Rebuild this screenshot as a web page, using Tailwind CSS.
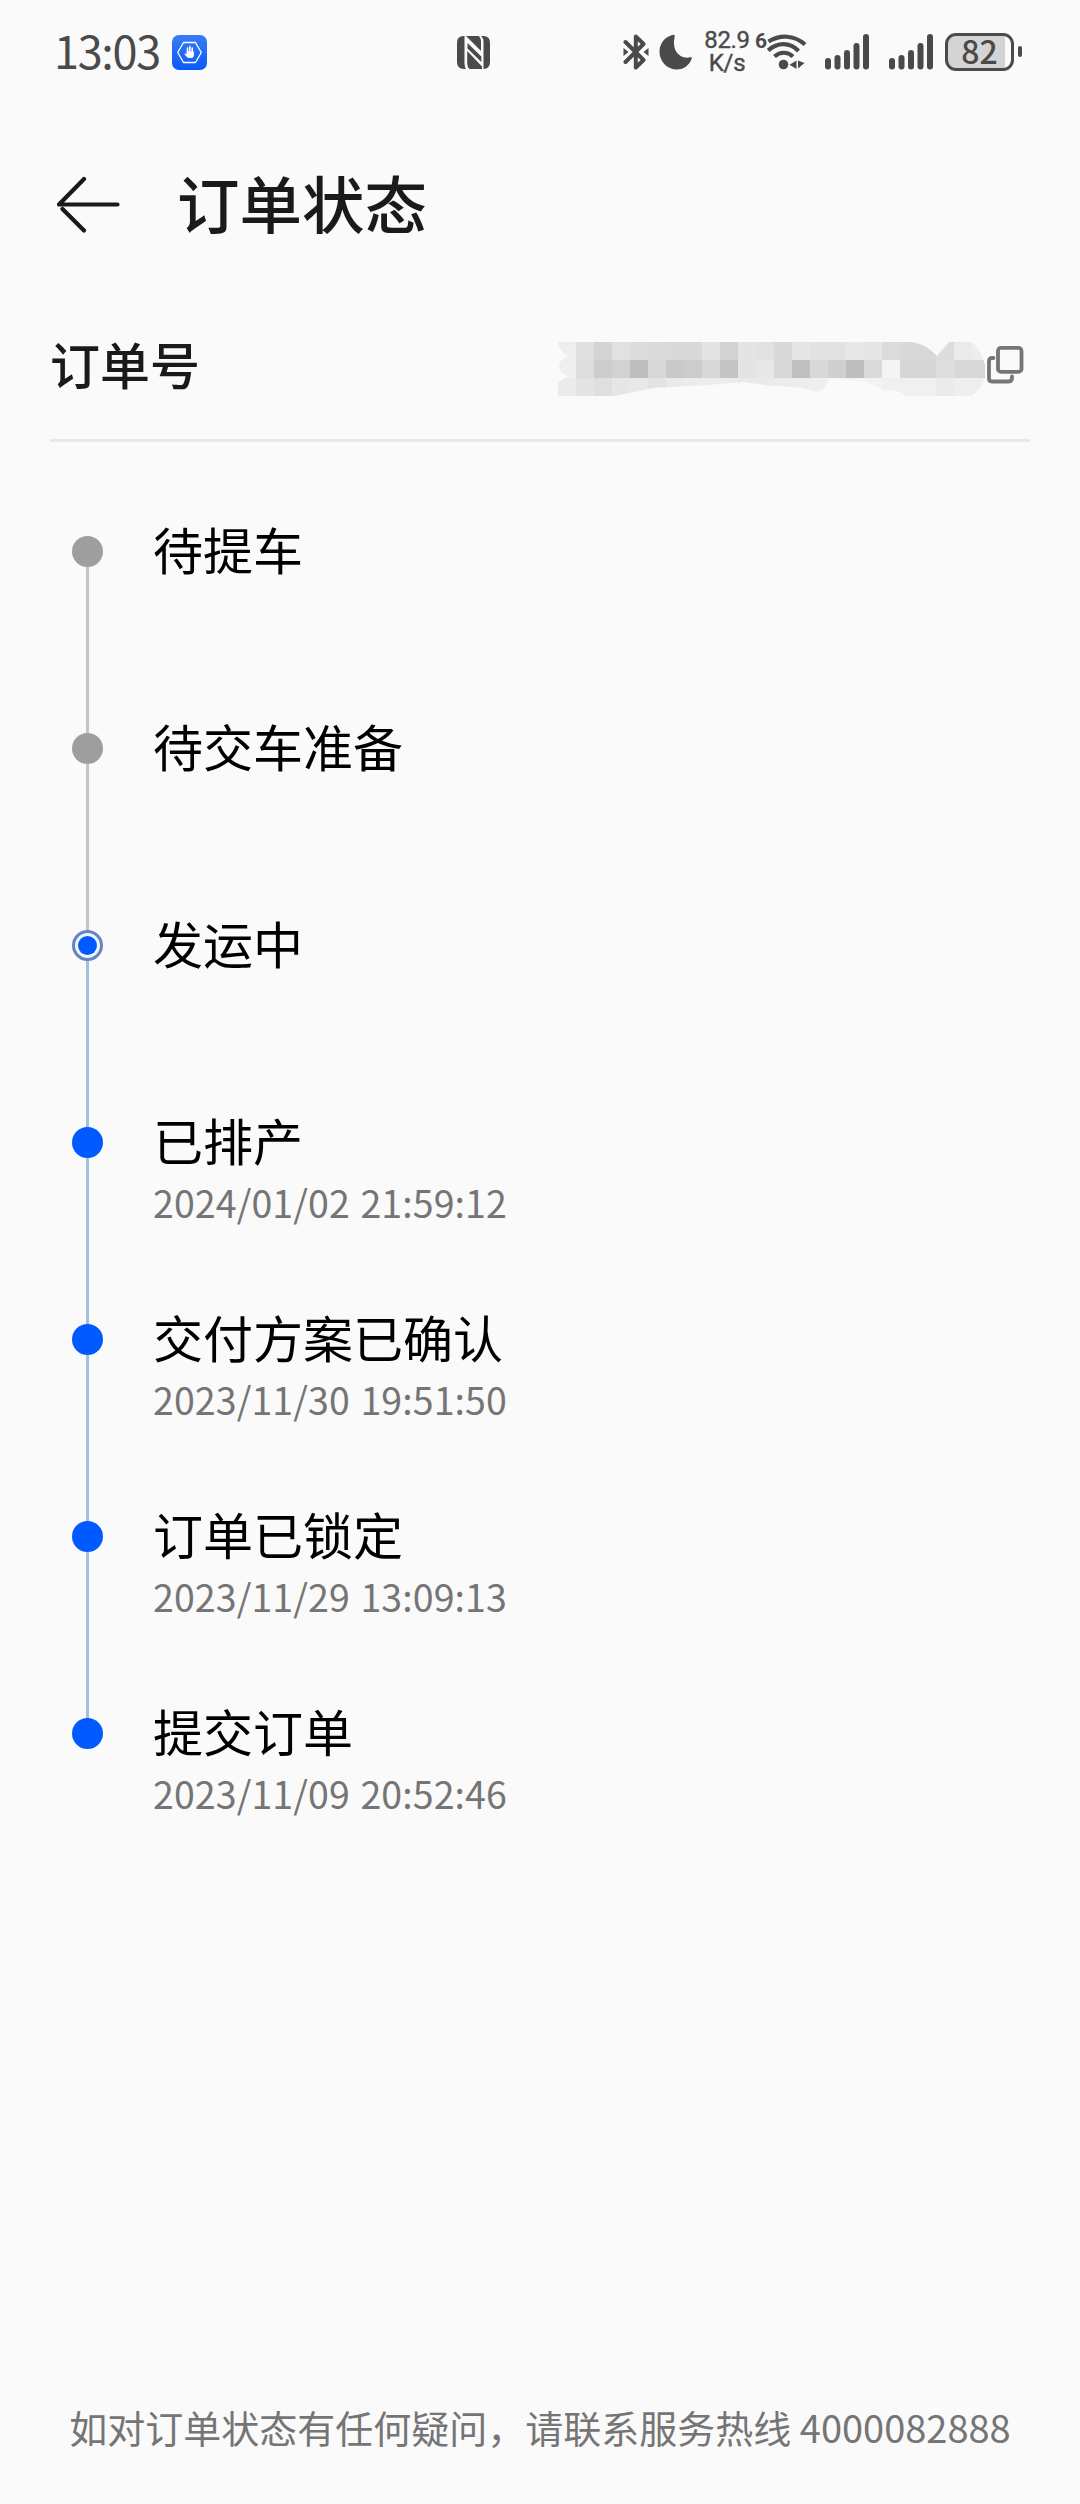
<!DOCTYPE html>
<html lang="zh-CN">
<head>
    <meta charset="UTF-8">
    <meta name="viewport" content="width=device-width, initial-scale=1.0">
    <title>订单状态</title>
    <script src="https://cdn.jsdelivr.net/npm/@tailwindcss/browser@4"></script>
</head>
<body class="bg-[#fafafa] w-[1080px] h-[2504px] flex flex-col overflow-hidden font-['Noto_Sans_CJK_SC',sans-serif]">
    <!-- Status bar -->
    <div class="h-[104px] flex items-center text-[#4a4a4a] shrink-0">
        <span class="ml-[54px] w-[118px] text-[45px] leading-[60px] tracking-[-1.3px] whitespace-nowrap -mt-1">13:03</span>
        <svg class="w-[35px] h-[35px] shrink-0" viewBox="0 0 35 35">
            <defs>
                <linearGradient id="appBg" x1="0" y1="0" x2="0" y2="1">
                    <stop offset="0" stop-color="#3b7cf6"/>
                    <stop offset="1" stop-color="#0a59f7"/>
                </linearGradient>
            </defs>
            <rect width="35" height="35" rx="7" fill="url(#appBg)"/>
            <path d="M11.500 7.500h12L29.300 17.500 23.500 27.500h-12L5.700 17.500z" fill="none" stroke="#fff" stroke-width="1.300" stroke-linejoin="round"/>
            <path d="M15.500 18v-5M17.800 17v-5.500M20.200 17.500v-4.500" stroke="#fff" stroke-width="1.600" stroke-linecap="round"/>
            <path d="M14.700 16.500h7.200V20c0 2-1 3-3 3h-1.500c-2 0-3.500-2-5-4 .8-1 1.600-.4 2.300.4z" fill="#fff"/>
        </svg>

        <!-- NFC -->
        <svg class="ml-[250px] w-[33px] h-[33px] shrink-0" viewBox="0 0 33 33" fill="#4a4a4a">
            <path d="M7.500 0H6.500Q0 0 0 7V26Q0 33 7 33H9Q7.500 31 7.500 27V0z"/>
            <path d="M9 0H21.500Q24 1.500 24 6V15z"/>
            <path d="M10.500 7L24.300 20.500V26L10.500 12.500z"/>
            <path d="M10.200 15L25 30.500V33H12.500Q10.200 31 10.200 27z"/>
            <path d="M24 0H26.500Q33 0 33 7V26Q33 32.500 26.500 33V6Q26.500 2 24 0z"/>
        </svg>

        <!-- Bluetooth -->
        <svg class="ml-[133px] w-[27px] h-[36px] shrink-0" viewBox="0 0 27 36">
            <path d="M2.500 8L20.500 26 12.800 33.500V2.500L20.500 10 2.500 28" fill="none" stroke="#4a4a4a" stroke-width="4" stroke-linecap="round" stroke-linejoin="round"/>
            <path d="M.5 14l5 4-5 4zM25.500 14l-5 4 5 4z" fill="#4a4a4a"/>
        </svg>
        <svg class="ml-[9px] w-[33px] h-[36px] shrink-0" viewBox="0 0 33 36">
            <path d="M14.500 .8C7 2 .5 9 .5 17.500.5 27.500 8 35.500 18 35.500c7 0 12.500-4.500 14.800-11 .2-1-.5-1.500-1.500-1.200C21 25.500 12.500 17 15.700 2.500c.2-1.100-.2-1.900-1.200-1.700z" fill="#4a4a4a"/>
        </svg>

        <!-- Network speed -->
        <div class="ml-[11px] w-[48px] shrink-0 flex flex-col items-center font-[Roboto,sans-serif] text-[24px] leading-[23px] tracking-[-0.3px] whitespace-nowrap [-webkit-text-stroke:0.4px_#4a4a4a]">
            <div>82.9</div>
            <div>K/s</div>
        </div>
        <span class="ml-[4px] w-[12px] -mt-[22px] shrink-0 font-[Roboto,sans-serif] font-bold text-[21px] leading-[23px]">6</span>
        <svg class="w-[40px] h-[36px] shrink-0" viewBox="0 0 40 36">
            <g fill="none" stroke="#4a4a4a" stroke-width="4.200">
                <path d="M1.500 7.500C13 .5 27 .8 38 10.500"/>
                <path d="M1.200 16.500C10.500 8 23 8 31.500 17"/>
                <path d="M7.500 22.500C13 17.500 20.500 17.500 26 22.500"/>
            </g>
            <circle cx="16.500" cy="30.500" r="4.800" fill="#4a4a4a"/>
            <path d="M29.500 26.500v8.500l-7-4.200zM31 26.500v8l6.500-5.500z" fill="#4a4a4a"/>
        </svg>

        <!-- Signal -->
        <svg class="ml-[18px] w-[44px] h-[36px] shrink-0" viewBox="0 0 44 36" fill="#4a4a4a">
            <rect x="0" y="24" width="6" height="11.500" rx="3"/>
            <rect x="9.500" y="21" width="6" height="14.500" rx="3"/>
            <rect x="19" y="16" width="6" height="19.500" rx="3"/>
            <rect x="28.500" y="9" width="6" height="26.500" rx="3"/>
            <rect x="38" y="0" width="6" height="35.500" rx="3"/>
        </svg>
        <svg class="ml-[20px] w-[44px] h-[36px] shrink-0" viewBox="0 0 44 36" fill="#4a4a4a">
            <rect x="0" y="24" width="6" height="11.500" rx="3"/>
            <rect x="9.500" y="21" width="6" height="14.500" rx="3"/>
            <rect x="19" y="16" width="6" height="19.500" rx="3"/>
            <rect x="28.500" y="9" width="6" height="26.500" rx="3"/>
            <rect x="38" y="0" width="6" height="35.500" rx="3"/>
        </svg>

        <!-- Battery -->
        <div class="ml-[12px] w-[69px] h-[38px] shrink-0 rounded-[11px] border-3 border-[#4a4a4a] bg-linear-to-r from-[#d4d4d4] from-90% to-[#fafafa] to-90% flex items-center justify-center text-[32px] leading-[32px] font-medium"><span class="-mt-[4px]">82</span></div>
        <div class="ml-[4px] w-[4px] h-[11px] -mt-[1px] rounded-full bg-[#4a4a4a] shrink-0"></div>
    </div>

    <!-- Title bar -->
    <div class="h-[200px] flex items-center shrink-0">
        <svg class="ml-[57px] mt-[2px] w-[64px] h-[58px] shrink-0" viewBox="0 0 64 58">
            <path d="M27 3L2 28.500H60.500M5.500 33L27 54.500" fill="none" stroke="#1a1a1a" stroke-width="4.200" stroke-linecap="round" stroke-linejoin="round"/>
        </svg>
        <h1 class="ml-[56px] text-[62.500px] leading-[80px] font-medium text-[#1a1a1a] -mt-1">订单状态</h1>
    </div>

    <!-- Order number -->
    <div class="mx-[50px] h-[138px] flex items-start justify-between border-b-[3px] border-[#e8e8e8] shrink-0">
        <span class="mt-[29px] text-[50px] leading-[60px] font-medium text-[#1a1a1a]">订单号</span>
        <div class="mt-[38px] mr-[6px] flex items-start">
            <svg class="w-[428px] h-[54px]" viewBox="0 0 428 54">
                <clipPath id="smudge">
                    <path d="M0 0H354Q368 2 379 14L391 0H414Q423 8 427 23V36Q423 47 414 54H347Q345 48 325 48Q317 44 310 40L271 36Q266 52 255 49L245 46L207 43L186 40L150 43L95 46L57 54H0V40L10 34Q0 30 1 23Q3 17 10 14Q0 8 0 0z"/>
                </clipPath>
                <g id="mosaic" clip-path="url(#smudge)" shape-rendering="crispEdges"></g>
            </svg>
            <svg class="mt-[4px] w-[38px] h-[38px]" viewBox="0 0 38 38" fill="none" stroke="#757575" stroke-width="3.800" stroke-linecap="round">
                <rect x="12" y="1.900" width="23.500" height="24" rx="3"/>
                <path d="M7.500 12H6Q3 12 3 15V32.500Q3 35.500 6 35.500H22.500Q26 35.500 26 32V30.500"/>
            </svg>
        </div>
    </div>

    <!-- Timeline -->
    <ul class="pl-[72px] pt-[94px] flex flex-col text-black">
        <li class="h-[197px] flex gap-[50px]">
            <div class="w-[31px] flex flex-col items-center">
                <div class="w-[31px] h-[31px] rounded-full bg-[#9e9e9e] shrink-0"></div>
                <div class="w-[3px] grow bg-[#c4c4c4]"></div>
            </div>
            <div class="-mt-[18px] text-[50px] leading-[60px]">待提车</div>
        </li>
        <li class="h-[197px] flex gap-[50px]">
            <div class="w-[31px] flex flex-col items-center">
                <div class="w-[31px] h-[31px] rounded-full bg-[#9e9e9e] shrink-0"></div>
                <div class="w-[3px] grow bg-[#c4c4c4]"></div>
            </div>
            <div class="-mt-[18px] text-[50px] leading-[60px]">待交车准备</div>
        </li>
        <li class="h-[197px] flex gap-[50px]">
            <div class="w-[31px] flex flex-col items-center">
                <div class="w-[31px] h-[31px] rounded-full border-3 border-[#6585c0] bg-[#f0f8ff] flex items-center justify-center shrink-0">
                    <div class="w-[19px] h-[19px] rounded-full bg-[#005aff]"></div>
                </div>
                <div class="w-[3px] grow bg-[#a3bfdc]"></div>
            </div>
            <div class="-mt-[18px] text-[50px] leading-[60px]">发运中</div>
        </li>
        <li class="h-[197px] flex gap-[50px]">
            <div class="w-[31px] flex flex-col items-center">
                <div class="w-[31px] h-[31px] rounded-full bg-[#005aff] shrink-0"></div>
                <div class="w-[3px] grow bg-[#a3bfdc]"></div>
            </div>
            <div class="-mt-[18px]">
                <div class="text-[50px] leading-[60px]">已排产</div>
                <div class="mt-[8px] text-[37.500px] leading-[50px] tracking-[0.1px] [word-spacing:2px] text-[#757575]">2024/01/02 21:59:12</div>
            </div>
        </li>
        <li class="h-[197px] flex gap-[50px]">
            <div class="w-[31px] flex flex-col items-center">
                <div class="w-[31px] h-[31px] rounded-full bg-[#005aff] shrink-0"></div>
                <div class="w-[3px] grow bg-[#a3bfdc]"></div>
            </div>
            <div class="-mt-[18px]">
                <div class="text-[50px] leading-[60px]">交付方案已确认</div>
                <div class="mt-[8px] text-[37.500px] leading-[50px] tracking-[0.1px] [word-spacing:2px] text-[#757575]">2023/11/30 19:51:50</div>
            </div>
        </li>
        <li class="h-[197px] flex gap-[50px]">
            <div class="w-[31px] flex flex-col items-center">
                <div class="w-[31px] h-[31px] rounded-full bg-[#005aff] shrink-0"></div>
                <div class="w-[3px] grow bg-[#a3bfdc]"></div>
            </div>
            <div class="-mt-[18px]">
                <div class="text-[50px] leading-[60px]">订单已锁定</div>
                <div class="mt-[8px] text-[37.500px] leading-[50px] tracking-[0.1px] [word-spacing:2px] text-[#757575]">2023/11/29 13:09:13</div>
            </div>
        </li>
        <li class="h-[197px] flex gap-[50px]">
            <div class="w-[31px] h-[31px] rounded-full bg-[#005aff] shrink-0"></div>
            <div class="-mt-[18px]">
                <div class="text-[50px] leading-[60px]">提交订单</div>
                <div class="mt-[8px] text-[37.500px] leading-[50px] tracking-[0.1px] [word-spacing:2px] text-[#757575]">2023/11/09 20:52:46</div>
            </div>
        </li>
    </ul>

    <!-- Footer -->
    <p class="mt-auto mb-[49px] text-center text-[38px] leading-[56px] text-[#757575] whitespace-nowrap">如对订单状态有任何疑问，请联系服务热线 4000082888</p>

    <script>
        // Grey levels of the masked order number, one row per line of cells
        const rows = [
            'ee e0 d4 e1 dc da d9 d9 e3 d2 e4 e1 d9 e6 e2 e2 e8 e6 dc d9 d8 dc ea ed',
            'ef dd cd d2 be d8 c9 cc d8 c4 e4 e8 d8 bf d8 cf be da f4 d7 d7 de d8 d8',
            'eb e4 df e6 e8 e3 ea ec ed ec e9 ea ec ed ee f2 f4 f2 f0 f0 f0 ea ee ee'
        ];
        let cells = '';
        rows.forEach((row, y) => {
            row.split(' ').forEach((c, x) => {
                cells += `<rect x="${x * 18}" y="${y * 18}" width="18" height="18" fill="#${c}${c}${c}"/>`;
            });
        });
        document.getElementById('mosaic').innerHTML = cells;
    </script>
</body>
</html>
